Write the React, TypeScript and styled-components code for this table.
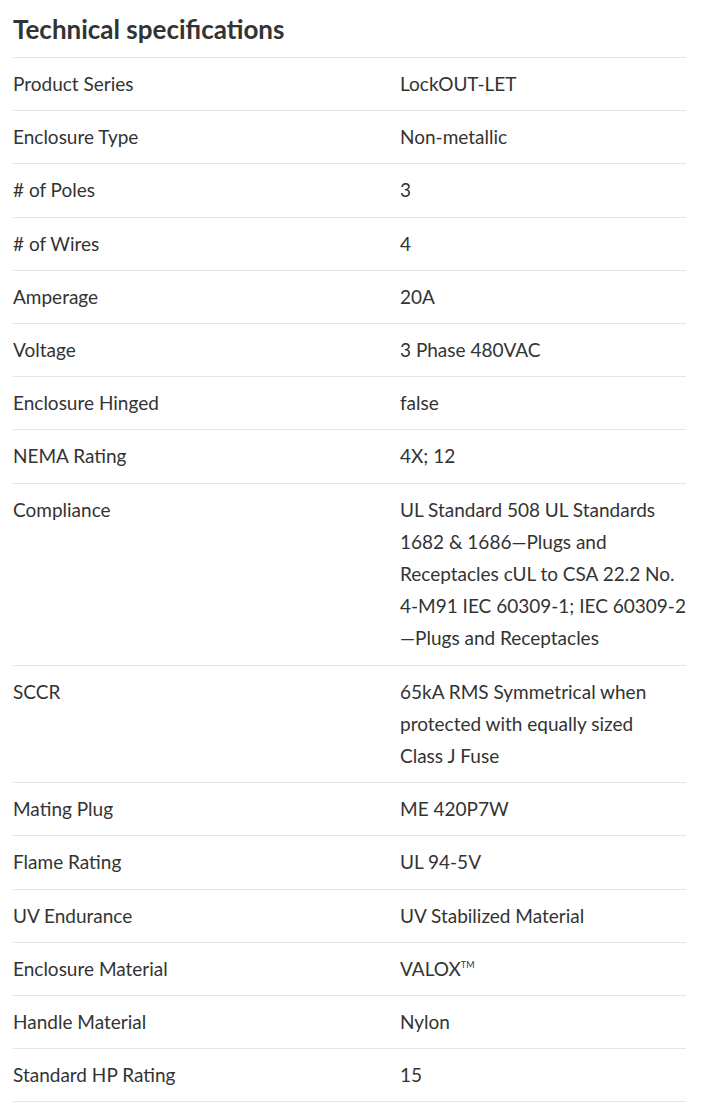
import React from "react";
import styled, { createGlobalStyle } from "styled-components";

const Global = createGlobalStyle`
  html, body { margin: 0; padding: 0; background: #ffffff; }
  body { font-family: Lato, "Liberation Sans", sans-serif; color: #333333; }
`;

const Page = styled.div`
  width: 673px;
  padding: 9px 15px 0 13px;
`;

const Title = styled.h2`
  margin: 0;
  padding: 0 0 8px 0;
  font-size: 26px;
  line-height: 40px;
  font-weight: 700;
  color: #333333;
  border-bottom: 1px solid #e6e6e6;
`;

const Table = styled.dl`
  margin: 0;
  display: grid;
  grid-template-columns: 387px 1fr;
`;

const Label = styled.dt`
  margin: 0;
  padding: 10px 0;
  font-size: 19px;
  line-height: 32.2px;
  color: #333333;
  border-bottom: 1px solid #e6e6e6;
`;

const Value = styled.dd`
  margin: 0;
  padding: 10px 0 10px 0;
  font-size: 19px;
  line-height: 32.2px;
  color: #333333;
  border-bottom: 1px solid #e6e6e6;
`;

const Tm = styled.sup`
  font-size: 9px;
  vertical-align: 8px;
  line-height: 0;
`;

const specs: [string, React.ReactNode][] = [
  ["Product Series", "LockOUT-LET"],
  ["Enclosure Type", "Non-metallic"],
  ["# of Poles", "3"],
  ["# of Wires", "4"],
  ["Amperage", "20A"],
  ["Voltage", "3 Phase 480VAC"],
  ["Enclosure Hinged", "false"],
  ["NEMA Rating", "4X; 12"],
  [
    "Compliance",
    "UL Standard 508 UL Standards 1682 & 1686—Plugs and Receptacles cUL to CSA 22.2 No. 4-M91 IEC 60309-1; IEC 60309-2—Plugs and Receptacles",
  ],
  ["SCCR", "65kA RMS Symmetrical when protected with equally sized Class\u00A0J Fuse"],
  ["Mating Plug", "ME 420P7W"],
  ["Flame Rating", "UL 94-5V"],
  ["UV Endurance", "UV Stabilized Material"],
  [
    "Enclosure Material",
    <>
      VALOX<Tm>TM</Tm>
    </>,
  ],
  ["Handle Material", "Nylon"],
  ["Standard HP Rating", "15"],
];

export default function App() {
  return (
    <>
      <Global />
      <Page>
        <Title>Technical specifications</Title>
        <Table>
          {specs.map(([k, v]) => (
            <React.Fragment key={k}>
              <Label>{k}</Label>
              <Value>{v}</Value>
            </React.Fragment>
          ))}
        </Table>
      </Page>
    </>
  );
}
